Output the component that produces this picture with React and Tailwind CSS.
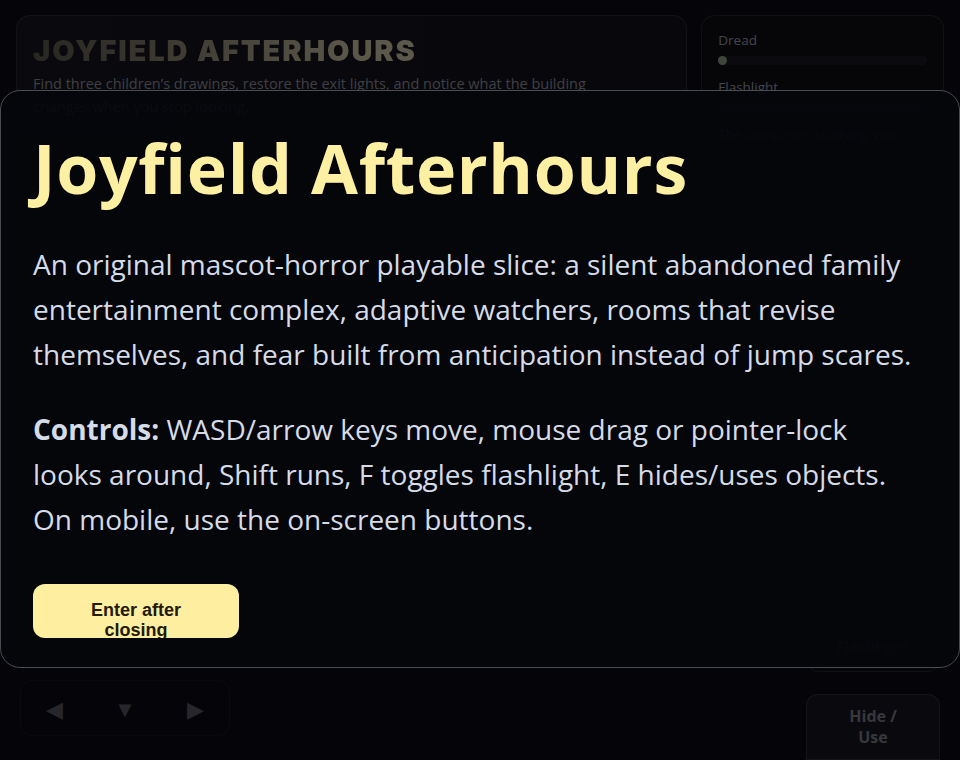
import React from "react";

const sans = { fontFamily: '"Open Sans", "Noto Sans", sans-serif' };

const Hud = () => {
  return (
    <div className="relative h-[760px] w-[960px] overflow-hidden bg-[#0c0c14]" style={sans}>
      <div className="flex gap-[14px] px-4 pt-[15px]">
        <div className="h-[118px] w-[672px] rounded-[14px] border border-white/10 bg-gradient-to-r from-[#15151f] to-[#12121b] px-4 pt-[16px]">
          <h2
            className="bg-gradient-to-r from-[#5a564a] via-[#c8bfa2] to-[#ddd4b6] bg-clip-text text-[29px] font-black leading-[38px] tracking-[0.065em] text-transparent"
            style={{ fontFamily: 'Inter, "DejaVu Sans", sans-serif' }}
          >
            JOYFIELD AFTERHOURS
          </h2>
          <p className="mt-[2px] max-w-[600px] text-[14.5px] leading-[23px] text-[#8b8b98]">
            Find three children’s drawings, restore the exit lights, and notice what the building changes when you stop looking.
          </p>
        </div>
        <div className="h-[140px] w-[243px] rounded-[14px] border border-white/10 bg-[#0e0e16] px-4 pt-[14px] text-[13.5px] leading-[20px] text-[#9a9aa6]">
          <div>Dread</div>
          <div className="mt-[6px] flex h-[9px] items-center rounded-full bg-white/5">
            <div className="h-[9px] w-[9px] rounded-full bg-[#8a9c84]" />
          </div>
          <div className="mt-[12px]">Flashlight</div>
          <div className="mt-[6px] h-[9px] rounded-full bg-[#1c2a3c]" />
          <div className="mt-[12px] text-[#6c6c78]">The complex is studying you.</div>
        </div>
      </div>

      <div className="absolute left-[470px] top-[370px] h-[20px] w-[20px] rounded-full border border-white/20" />

      <div className="absolute bottom-[88px] right-[20px] flex h-[52px] w-[134px] items-center justify-center rounded-[12px] border border-white/10 text-[15px] font-bold text-[#4a4a56]">
        Flashlight
      </div>

      <div className="absolute bottom-0 left-0 right-0 flex items-end justify-between px-5">
        <div className="mb-[24px] flex h-[56px] w-[210px] items-center justify-around rounded-[12px] border border-white/5 text-[22px] text-[#55555f]">
          <span>◀</span>
          <span>▼</span>
          <span>▶</span>
        </div>
        <div className="flex h-[66px] w-[134px] items-center justify-center rounded-t-[12px] border border-white/10 bg-white/5 text-center text-[16px] font-bold leading-[21px] text-[#7a7a86]">
          Hide /<br />Use
        </div>
      </div>
    </div>
  );
};

const IntroModal = () => {
  return (
    <div
      className="absolute left-0 top-[90px] flex h-[578px] w-[960px] flex-col items-start rounded-[20px] border border-[#4a4c54] bg-[#05060b]/[0.93] px-8 pt-[40px]"
      style={sans}
    >
      <h1 className="text-[68px] font-bold leading-[1.1] tracking-[0.01em] text-[#fef0a2]">Joyfield Afterhours</h1>
      <p className="mt-[36px] max-w-[884px] text-[28px] leading-[45px] text-[#d6dbe8]">
        An original mascot-horror playable slice: a silent abandoned family entertainment complex, adaptive watchers, rooms that revise themselves, and fear built from anticipation instead of jump scares.
      </p>
      <p className="mt-[30px] max-w-[884px] text-[28px] leading-[45px] text-[#d6dbe8]">
        <strong className="font-bold">Controls:</strong> WASD/arrow keys move, mouse drag or pointer-lock looks around, Shift runs, F toggles flashlight, E hides/uses objects. On mobile, use the on-screen buttons.
      </p>
      <button
        className="mt-[42px] flex h-[54px] w-[206px] shrink-0 items-start justify-center overflow-hidden rounded-[12px] bg-[#fdeea0] px-7 pt-4 text-[18px] font-bold leading-[20px] text-[#231a0c]"
        style={{ fontFamily: '"Liberation Sans", Arial, sans-serif' }}
      >
        <span className="block text-center">Enter after closing</span>
      </button>
    </div>
  );
};

export default function App() {
  return (
    <div className="relative h-[760px] w-[960px] overflow-hidden">
      <Hud />
      <div className="absolute inset-0 bg-black/55" />
      <IntroModal />
    </div>
  );
}
